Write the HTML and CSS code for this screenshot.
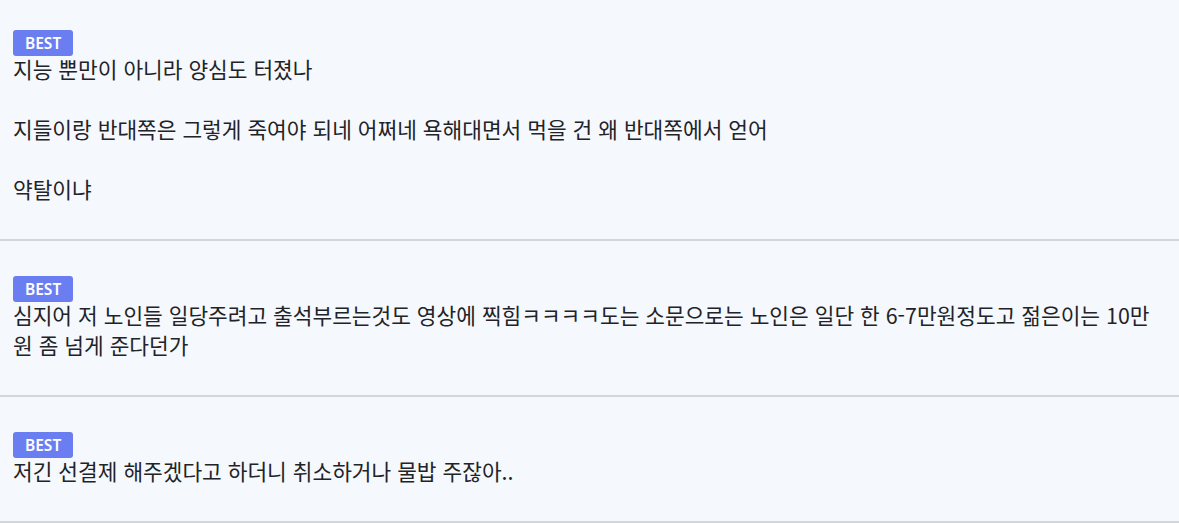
FILE: index.html
```html
<!DOCTYPE html>
<html lang="ko">
<head>
  <meta charset="UTF-8">
  <meta name="viewport" content="width=device-width, initial-scale=1.0">
  <title>베스트 댓글</title>
  <link rel="stylesheet" href="styles.css">
</head>
<body>

<ul class="comment-list">
  <li class="comment">
    <span class="badge">BEST</span>
    <div class="comment-text">
      지능 뿐만이 아니라 양심도 터졌나<br><br>
      지들이랑 반대쪽은 그렇게 죽여야 되네 어쩌네 욕해대면서 먹을 건 왜 반대쪽에서 얻어<br><br>
      약탈이냐
    </div>
  </li>
  <li class="comment">
    <span class="badge">BEST</span>
    <div class="comment-text">
      심지어 저 노인들 일당주려고 출석부르는것도 영상에 찍힘ㅋㅋㅋㅋ도는 소문으로는 노인은 일단 한 6-7만원정도고 젊은이는 10만원 좀 넘게 준다던가
    </div>
  </li>
  <li class="comment">
    <span class="badge">BEST</span>
    <div class="comment-text">
      저긴 선결제 해주겠다고 하더니 취소하거나 물밥 주잖아..
    </div>
  </li>
</ul>

</body>
</html>
```

FILE: styles.css
```css
* {
  box-sizing: border-box;
}

body {
  margin: 0;
  background-color: #f5f8fd;
  font-family: "Noto Sans CJK KR", "Noto Sans", sans-serif;
  color: #222327;
}

.comment-list {
  list-style: none;
  margin: 0;
  padding: 0;
}

.comment {
  display: flex;
  flex-direction: column;
  align-items: flex-start;
  padding: 35px 13px;
  border-bottom: 2px solid #d3d6db;
}

/* list is scrolled a little past the top */
.comment:first-child {
  padding-top: 30px;
}

.badge {
  height: 26px;
  padding: 0 12px;
  line-height: 26px;
  font-family: "Noto Sans", sans-serif;
  font-size: 15.5px;
  font-weight: 600;
  color: #fff;
  background-color: #6a7ef1;
  border-radius: 3px;
}

.comment-text {
  margin-top: -2px;
  font-size: 21.4px;
  line-height: 30px;
}
```
